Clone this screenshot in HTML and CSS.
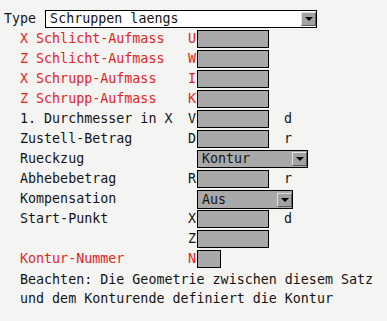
FILE: index.html
```html
<!DOCTYPE html>
<html lang="de">
<head>
    <meta charset="UTF-8">
    <title>Zyklus</title>
    <link rel="stylesheet" href="styles.css">
</head>
<body>
    <div class="type-row">
        <span class="type-label">Type</span>
        <div class="combo combo-type">
            <span class="combo-text">Schruppen laengs</span>
            <span class="combo-btn"></span>
        </div>
    </div>

    <div class="fields">
        <span class="label red">X Schlicht-Aufmass</span><span class="addr red">U</span><span class="field"></span><span class="unit"></span>
        <span class="label red">Z Schlicht-Aufmass</span><span class="addr red">W</span><span class="field"></span><span class="unit"></span>
        <span class="label red">X Schrupp-Aufmass</span><span class="addr red">I</span><span class="field"></span><span class="unit"></span>
        <span class="label red">Z Schrupp-Aufmass</span><span class="addr red">K</span><span class="field"></span><span class="unit"></span>
        <span class="label">1. Durchmesser in X</span><span class="addr">V</span><span class="field"></span><span class="unit">d</span>
        <span class="label">Zustell-Betrag</span><span class="addr">D</span><span class="field"></span><span class="unit">r</span>
        <span class="label">Rueckzug</span><span class="addr"></span>
        <div class="combo combo-gray combo-kontur">
            <span class="combo-text">Kontur</span>
            <span class="combo-btn"></span>
        </div>
        <span class="label">Abhebebetrag</span><span class="addr">R</span><span class="field"></span><span class="unit">r</span>
        <span class="label">Kompensation</span><span class="addr"></span>
        <div class="combo combo-gray combo-aus">
            <span class="combo-text">Aus</span>
            <span class="combo-btn"></span>
        </div>
        <span class="label">Start-Punkt</span><span class="addr">X</span><span class="field"></span><span class="unit">d</span>
        <span class="label"></span><span class="addr">Z</span><span class="field"></span><span class="unit"></span>
        <span class="label red">Kontur-Nummer</span><span class="addr red">N</span><span class="field field-small"></span><span class="unit"></span>
    </div>

    <p class="note">Beachten: Die Geometrie zwischen diesem Satz<br>und dem Konturende definiert die Kontur</p>
</body>
</html>
```

FILE: styles.css
```css
body {
    margin: 0;
    padding: 10px 4px;
    background-color: #f4f4f2;
    color: #141414;
    font-family: "DejaVu Sans Mono", monospace;
    font-size: 13.33px;
    line-height: 18px;
}
.red {
    color: #e2251b;
}
.type-row {
    display: flex;
    align-items: center;
    gap: 9px;
    height: 18px;
    margin-bottom: 2px;
}
.combo {
    display: flex;
    align-items: center;
    box-sizing: border-box;
    height: 18px;
    border: 1px solid #000;
}
.combo-type {
    width: 272px;
    background-color: #fff;
}
.combo-gray {
    background-color: #a9a9a9;
    grid-column: 3 / span 2;
}
.combo-kontur {
    width: 111px;
}
.combo-aus {
    width: 96px;
    height: 19px;
}
.combo-text {
    flex: 1;
    padding-left: 4px;
}
.combo-btn {
    position: relative;
    box-sizing: border-box;
    width: 15px;
    height: 14px;
    background-color: #a2a2a2;
    border-top: 1px solid #e0e0e0;
    border-left: 1px solid #e0e0e0;
    border-right: 1px solid #5c5c5c;
    border-bottom: 1px solid #5c5c5c;
}
.combo-btn::after {
    content: "";
    position: absolute;
    left: 3px;
    top: 4px;
    border-left: 4px solid transparent;
    border-right: 4px solid transparent;
    border-top: 4px solid #000;
}
.fields {
    display: grid;
    grid-template-columns: 168px 9px 72px auto;
    grid-auto-rows: 18px;
    row-gap: 2px;
    padding-left: 16px;
}
.addr {
    text-align: right;
    padding-right: 1px;
}
.field {
    box-sizing: border-box;
    height: 18px;
    border: 1px solid #000;
    background-color: #a9a9a9;
}
.field-small {
    width: 24px;
}
.unit {
    padding-left: 15px;
}
.note {
    margin: 2px 0 0 16px;
    line-height: 19px;
}
```
